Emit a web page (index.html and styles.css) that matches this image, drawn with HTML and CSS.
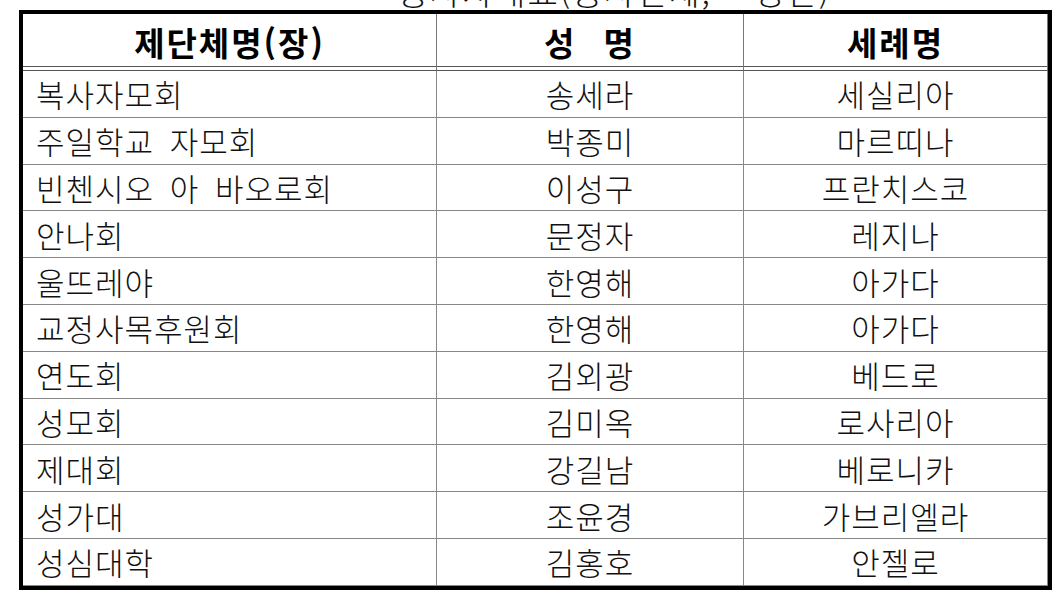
FILE: index.html
```html
<!DOCTYPE html>
<html lang="ko">
<head>
<meta charset="utf-8">
<title>봉사단체 명단</title>
<link rel="stylesheet" href="styles.css">
</head>
<body>
<div class="title"><span>봉사자대표(봉사단체, ~ 명단)</span></div>
<div class="wrap">
<table class="roster">
<colgroup>
<col class="c1"><col class="c2"><col class="c3">
</colgroup>
<thead>
<tr><th>제단체명(장)</th><th><span class="wide">성 명</span></th><th>세례명</th></tr>
</thead>
<tbody>
<tr><td class="org">복사자모회</td><td>송세라</td><td>세실리아</td></tr>
<tr><td class="org">주일학교 자모회</td><td>박종미</td><td>마르띠나</td></tr>
<tr><td class="org">빈첸시오 아 바오로회</td><td>이성구</td><td>프란치스코</td></tr>
<tr><td class="org">안나회</td><td>문정자</td><td>레지나</td></tr>
<tr><td class="org">울뜨레야</td><td>한영해</td><td>아가다</td></tr>
<tr><td class="org">교정사목후원회</td><td>한영해</td><td>아가다</td></tr>
<tr><td class="org">연도회</td><td>김외광</td><td>베드로</td></tr>
<tr><td class="org">성모회</td><td>김미옥</td><td>로사리아</td></tr>
<tr><td class="org">제대회</td><td>강길남</td><td>베로니카</td></tr>
<tr><td class="org">성가대</td><td>조윤경</td><td>가브리엘라</td></tr>
<tr><td class="org">성심대학</td><td>김홍호</td><td>안젤로</td></tr>
</tbody>
</table>
</div>
</body>
</html>
```
FILE: styles.css
```css
html, body {
  margin: 0;
  padding: 0;
  background: #fff;
}
body {
  font-family: "Noto Sans CJK KR", "Noto Sans", sans-serif;
  color: #111;
}
.title {
  height: 10px;
  overflow: hidden;
  display: flex;
  align-items: flex-end;
  padding-left: 398px;
}
.title span {
  flex: none;
  font-size: 33px;
  line-height: 33px;
  font-weight: 300;
  letter-spacing: 2px;
  margin-bottom: 2px;
  white-space: nowrap;
}
.wrap {
  margin-left: 19px;
}
.roster {
  width: 1033px;
  table-layout: fixed;
  border-collapse: separate;
  border-spacing: 0;
  border: 4px solid #000;
}
.c1 { width: 414px; }
.c2 { width: 307px; }
.c3 { width: 304px; }
.roster th {
  box-sizing: border-box;
  height: 57px;
  padding: 0;
  font-size: 33px;
  font-weight: 700;
  letter-spacing: 2px;
  text-align: center;
  color: #000;
  border-right: 1px solid #777;
  border-bottom: 1px solid #555;
  background: linear-gradient(#555, #555) no-repeat left bottom 3px / 100% 1px;
}
.wide {
  word-spacing: 16px;
}
.roster td {
  box-sizing: border-box;
  height: 46.8px;
  padding: 0;
  font-size: 31px;
  font-weight: 300;
  letter-spacing: 1px;
  word-spacing: 6px;
  text-align: center;
  white-space: nowrap;
  border-right: 1px solid #888;
  border-bottom: 1px solid #888;
}
.roster td.org {
  text-align: left;
  padding-left: 13px;
}
```
